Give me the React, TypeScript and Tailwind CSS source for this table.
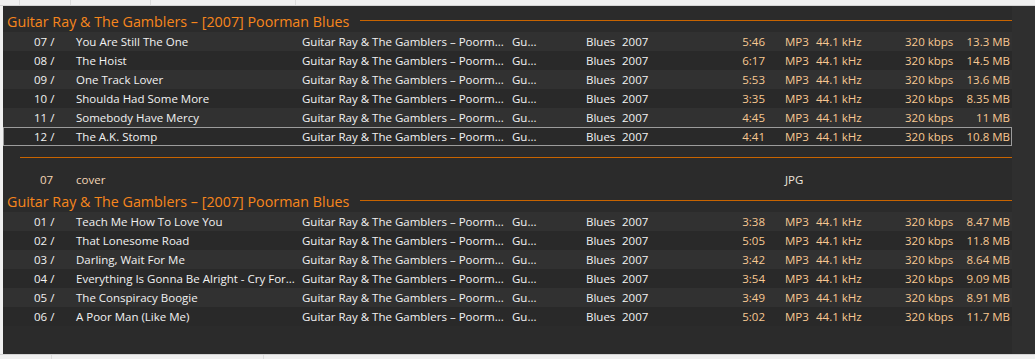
const tracksA = [
  { n: '07', title: 'You Are Still The One', time: '5:46', size: '13.3 MB' },
  { n: '08', title: 'The Hoist', time: '6:17', size: '14.5 MB' },
  { n: '09', title: 'One Track Lover', time: '5:53', size: '13.6 MB' },
  { n: '10', title: 'Shoulda Had Some More', time: '3:35', size: '8.35 MB' },
  { n: '11', title: 'Somebody Have Mercy', time: '4:45', size: '11 MB' },
  { n: '12', title: 'The A.K. Stomp', time: '4:41', size: '10.8 MB' },
];

const tracksB = [
  { n: '01', title: 'Teach Me How To Love You', time: '3:38', size: '8.47 MB' },
  { n: '02', title: 'That Lonesome Road', time: '5:05', size: '11.8 MB' },
  { n: '03', title: 'Darling, Wait For Me', time: '3:42', size: '8.64 MB' },
  { n: '04', title: 'Everything Is Gonna Be Alright - Cry For...', time: '3:54', size: '9.09 MB' },
  { n: '05', title: 'The Conspiracy Boogie', time: '3:49', size: '8.91 MB' },
  { n: '06', title: 'A Poor Man (Like Me)', time: '5:02', size: '11.7 MB' },
];

type Track = { n: string; title: string; time: string; size: string };

function GroupHeader() {
  return (
    <div className="flex items-center h-[23px] pl-[4px]">
      <span className="text-[14.3px] pt-[3px] text-[#f7861c] whitespace-nowrap leading-none">
        Guitar Ray &amp; The Gamblers – [2007] Poorman Blues
      </span>
      <div className="flex-1 h-px bg-[#c86400] ml-[11px]" />
    </div>
  );
}

function TrackRow({ t, i, selected }: { t: Track; i: number; selected?: boolean }) {
  const bg = i % 2 === 0 ? 'bg-[#313131]' : 'bg-[#292929]';
  return (
    <div
      className={`flex items-center h-[19px] pt-[1px] text-[11.5px] whitespace-nowrap ${bg} ${
        selected ? 'outline outline-1 -outline-offset-1 outline-[#9c9c9c]' : ''
      }`}
    >
      <span className="w-[73px] pl-[31px] text-[#f2f2f2]">{t.n} /</span>
      <span className="w-[226px] text-[#f2f2f2]">{t.title}</span>
      <span className="w-[210px] text-[#f2f2f2]">Guitar Ray &amp; The Gamblers – Poorm...</span>
      <span className="w-[74px] text-[#f2f2f2]">Gu...</span>
      <span className="w-[36px] text-[#f2f2f2]">Blues</span>
      <span className="w-[40px] text-[#f2f2f2]">2007</span>
      <span className="w-[103px] text-right text-[#f8c891]">{t.time}</span>
      <span className="w-[20px]" />
      <span className="w-[31px] text-[#f8c891]">MP3</span>
      <span className="w-[89px] text-[#f8c891]">44.1 kHz</span>
      <span className="w-[46px] text-[#f8c891]">320 kbps</span>
      <span className="w-[59px] text-right text-[#f8c891]">{t.size}</span>
    </div>
  );
}

export default function App() {
  return (
    <div
      className="w-[1035px] h-[359px] bg-[#f0f0f0] flex flex-col overflow-hidden"
      style={{ fontFamily: '"Open Sans", "Noto Sans", sans-serif' }}
    >
      <div className="h-[6px] flex border-b border-[#d4d4d4] shrink-0">
        <div className="w-[20px] border-r border-[#dcdcdc]" />
        <div className="w-[51px] border-r border-[#dcdcdc]" />
        <div className="w-[80px] border-r border-[#dcdcdc]" />
        <div className="w-[145px] border-r border-[#dcdcdc]" />
        <div className="flex-1" />
      </div>
      <div className="flex flex-1 pl-[3px]">
        <div className="flex-1 bg-[#2b2b2b] flex">
          <div className="w-[1009px] flex flex-col pt-[3px]">
            <GroupHeader />
            {tracksA.map((t, i) => (
              <TrackRow key={t.n} t={t} i={i} selected={i === 5} />
            ))}
            <div className="h-[12px] flex items-end pl-[17px]">
              <div className="flex-1 h-px bg-[#c86400]" />
            </div>
            <div className="h-[19px] mt-[12px] pt-[1px] flex items-center text-[11.5px] whitespace-nowrap">
              <span className="w-[73px] pl-[37px] text-[#f3d6b6]">07</span>
              <span className="w-[709px] text-[#f3d6b6]">cover</span>
              <span className="text-[#ece4dc]">JPG</span>
            </div>
            <GroupHeader />
            {tracksB.map((t, i) => (
              <TrackRow key={t.n} t={t} i={i} />
            ))}
          </div>
          <div className="flex-1 bg-[#2f2f2f]" />
        </div>
      </div>
      <div className="h-[5px] flex border-t border-[#d4d4d4] shrink-0">
        <div className="w-[52px] border-r border-[#dcdcdc]" />
        <div className="w-[212px] border-r border-[#dcdcdc]" />
        <div className="flex-1" />
      </div>
    </div>
  );
}
